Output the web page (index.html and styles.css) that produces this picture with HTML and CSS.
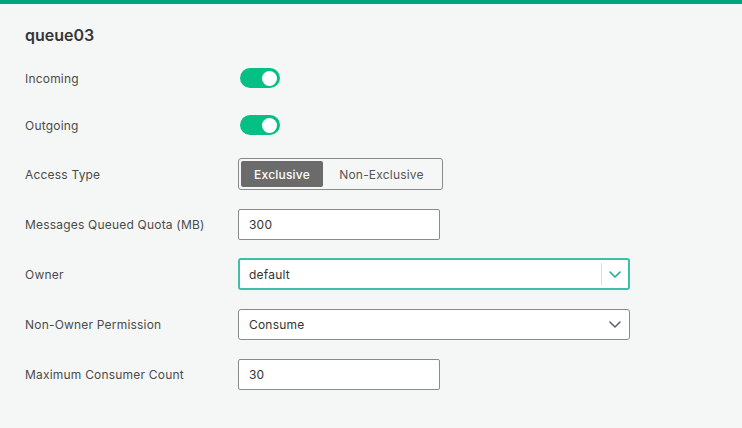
FILE: index.html
```html
<!DOCTYPE html>
<html>
<head>
<meta charset="utf-8">
<link rel="stylesheet" href="styles.css">
</head>
<body>
<div class="topbar"></div>
<main class="panel">
  <h1 class="title">queue03</h1>
  <div class="form">
    <div class="row row-toggle">
      <label class="label">Incoming</label>
      <span class="toggle on"><span class="knob"></span></span>
    </div>
    <div class="row row-toggle">
      <label class="label">Outgoing</label>
      <span class="toggle on"><span class="knob"></span></span>
    </div>
    <div class="row row-seg">
      <label class="label">Access Type</label>
      <div class="segmented">
        <span class="seg seg-active">Exclusive</span>
        <span class="seg">Non-Exclusive</span>
      </div>
    </div>
    <div class="row">
      <label class="label">Messages Queued Quota (MB)</label>
      <div class="input short">300</div>
    </div>
    <div class="row">
      <label class="label">Owner</label>
      <div class="select focused">
        <span class="select-value">default</span>
        <span class="divider"></span>
        <svg class="chev" width="12" height="7" viewBox="0 0 12 7"><path d="M1 1 L6 6 L11 1" fill="none" stroke="#1fae8f" stroke-width="1.6" stroke-linecap="round" stroke-linejoin="round"/></svg>
      </div>
    </div>
    <div class="row">
      <label class="label">Non-Owner Permission</label>
      <div class="select">
        <span class="select-value">Consume</span>
        <svg class="chev" width="12" height="7" viewBox="0 0 12 7"><path d="M1 1 L6 6 L11 1" fill="none" stroke="#5b5f6e" stroke-width="1.5" stroke-linecap="round" stroke-linejoin="round"/></svg>
      </div>
    </div>
    <div class="row">
      <label class="label">Maximum Consumer Count</label>
      <div class="input short">30</div>
    </div>
  </div>
</main>
</body>
</html>
```

FILE: styles.css
```css
html, body {
  margin: 0;
  padding: 0;
}
body {
  background: #f5f7f6;
  font-family: Inter, "Noto Sans", "Liberation Sans", sans-serif;
  color: #474747;
  letter-spacing: 0.2px;
  width: 742px;
  height: 428px;
  overflow: hidden;
}
.topbar {
  height: 4px;
  background: #00a57e;
}
.panel {
  padding: 0 0 0 25px;
}
.title {
  margin: 0;
  padding-top: 21px;
  height: 21px;
  line-height: 21px;
  font-size: 16px;
  font-weight: 600;
  color: #363636;
  letter-spacing: 0;
}
.form {
  display: flex;
  flex-direction: column;
  gap: 19px;
  margin-top: 18px;
}
.row {
  display: flex;
  align-items: center;
  height: 31px;
}
.row-toggle {
  height: 28px;
}
.row-seg {
  height: 32px;
}
.label {
  width: 213px;
  flex: none;
  font-size: 12px;
  color: #4b4b4b;
}
.toggle {
  margin-left: 2px;
  width: 40px;
  height: 20px;
  border-radius: 10px;
  background: #05c085;
  display: flex;
  align-items: center;
  justify-content: flex-end;
  padding-right: 3px;
  box-sizing: border-box;
}
.knob {
  width: 15px;
  height: 15px;
  border-radius: 50%;
  background: #fff;
}
.segmented {
  display: flex;
  align-items: stretch;
  box-sizing: border-box;
  height: 32px;
  width: 205px;
  border: 1px solid #8a8a8a;
  border-radius: 3px;
  padding: 2px;
}
.seg {
  display: flex;
  align-items: center;
  justify-content: center;
  font-size: 12px;
  color: #555;
  flex: 1;
}
.seg-active {
  flex: none;
  width: 82px;
  background: #6b6b6b;
  color: #fff;
  border-radius: 2px;
  font-weight: 500;
}
.input {
  box-sizing: border-box;
  height: 31px;
  background: #fff;
  border: 1px solid #8a8a8a;
  border-radius: 2px;
  padding-left: 10px;
  display: flex;
  align-items: center;
  font-size: 12px;
  color: #333;
}
.short {
  width: 202px;
}
.select {
  box-sizing: border-box;
  height: 31px;
  width: 392px;
  background: #fff;
  border: 1px solid #8a8a8a;
  border-radius: 3px;
  padding-left: 10px;
  padding-right: 8px;
  display: flex;
  align-items: center;
  font-size: 12px;
  color: #333;
}
.select.focused {
  height: 32px;
  border: 2px solid #3fbfa5;
  padding-left: 9px;
  padding-right: 7px;
  margin-top: -1px;
}
.select-value {
  flex: 1;
}
.divider {
  width: 1px;
  align-self: stretch;
  margin: 3px 7px 3px 0;
  background: #dcdcdc;
}
.chev {
  display: block;
  flex: none;
}
```
